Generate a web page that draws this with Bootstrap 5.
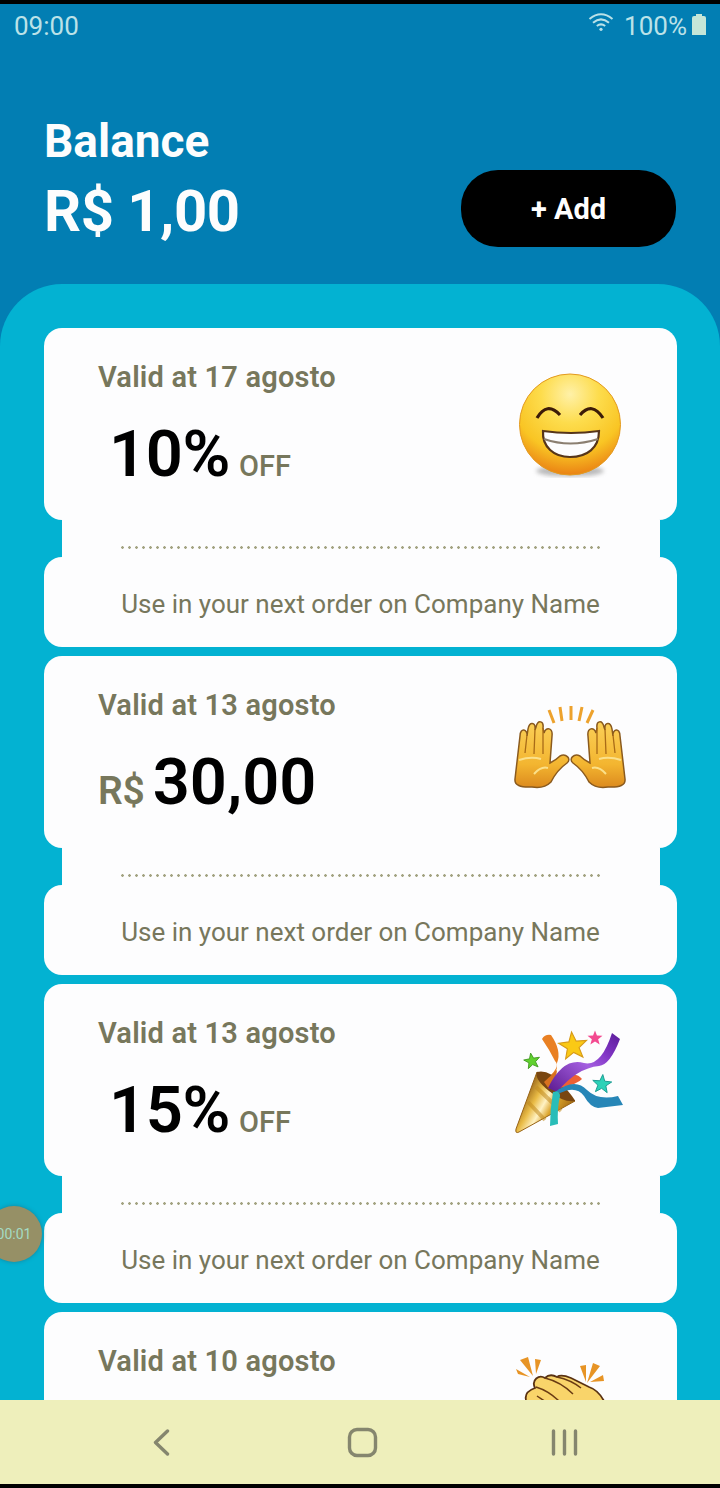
<!DOCTYPE html>
<html lang="en">
<head>
<meta charset="utf-8">
<meta name="viewport" content="width=device-width, initial-scale=1">
<title>Balance</title>
<link href="https://cdn.jsdelivr.net/npm/bootstrap@5.3.0/dist/css/bootstrap.min.css" rel="stylesheet">
<style>
  body { font-family: Roboto, sans-serif; background: #000; width: 720px; height: 1488px; color: #fdfdfd; }
  .phone { height: 1488px; border-top: 4px solid #000; border-bottom: 4px solid #000; background: #027eb3; }
  .statusbar { height: 44px; font-size: 26px; line-height: 44px; color: #bbe2e8; padding: 0 14px; flex: none; }
  .icon-wifi { margin: 9px 10px 0 0; }
  .icon-battery { margin: 10px 0 0 5px; }
  .hero { height: 236px; padding: 72px 44px 0; flex: none; }
  .hero-label { font-size: 46px; line-height: 54px; font-weight: 700; margin-top: -6px; }
  .hero-sum { font-size: 58px; line-height: 68px; font-weight: 700; margin-top: 9px; letter-spacing: -.5px; }
  .btn-add { width: 215px; height: 77px; border-radius: 37px; background: #000; color: #fff; font-size: 29px; font-weight: 700; margin-top: 50px; padding: 2px 0 0; }
  .btn-add:hover { background: #000; color: #fff; }
  .sheet { background: #03b2d2; border-radius: 62px 62px 0 0; padding: 44px 43px 0 44px; min-height: 0; }
  .ticket { height: 319px; margin-bottom: 9px; flex: none; }
  .t-top { height: 192px; background: #fdfdfe; border-radius: 18px; padding: 32px 45px 0 54px; color: #77775c; }
  .t-mid { height: 37px; background: #fdfdfe; margin: 0 17px 0 18px; padding: 26px 59px 0 57px; }
  .t-foot { height: 90px; background: #fdfdfe; border-radius: 18px; font-size: 26px; line-height: 94px; color: #77775c; white-space: nowrap; }
  .dots { height: 3px; background: radial-gradient(circle, #a3a382 1px, transparent 1.6px) 0 0 / 7px 3px repeat-x; }
  .valid { font-size: 29px; line-height: 34px; font-weight: 600; white-space: nowrap; letter-spacing: .19px; }
  .amount { margin-top: 20px; white-space: nowrap; line-height: 80px; }
  .amount b { font-size: 65px; color: #000; font-weight: 600; margin-left: 4px; }
  .amount .pct { margin: 0 5px 0 11px; letter-spacing: -.4px; }
  .off { font-size: 29px; font-weight: 500; }
  .cur { font-size: 39px; font-weight: 600; letter-spacing: -.2px; }
  .emoji { width: 140px; height: 130px; flex: none; margin-right: -8px; }
  .navkeys { height: 84px; background: #eeefbb; flex: none; }
  .rec { position: absolute; left: -14px; top: 1202px; width: 56px; height: 56px; border-radius: 50%; background: #969066; color: #a4dcc4; font-size: 14px; line-height: 57px; text-align: center; box-shadow: 0 0 4px #16839b; }
</style>
</head>
<body>
<svg width="0" height="0" class="position-absolute">
  <defs>
    <radialGradient id="face" cx=".5" cy=".2" r=".82"><stop offset="0" stop-color="#fff1a8"/><stop offset=".35" stop-color="#fddc4c"/><stop offset=".7" stop-color="#f9c524"/><stop offset="1" stop-color="#e97c12"/></radialGradient>
    <linearGradient id="skin" x1="0" y1="0" x2="0" y2="1"><stop offset="0" stop-color="#fbd058"/><stop offset=".65" stop-color="#f3b530"/><stop offset="1" stop-color="#dc8a1e"/></linearGradient>
    <linearGradient id="cone" x1="20" y1="80" x2="62" y2="104" gradientUnits="userSpaceOnUse"><stop offset="0" stop-color="#8d5a13"/><stop offset=".3" stop-color="#e9bb45"/><stop offset=".5" stop-color="#fff2c4"/><stop offset=".68" stop-color="#dca52d"/><stop offset="1" stop-color="#a86f14"/></linearGradient>
    <linearGradient id="violet" x1="0" y1="1" x2="1" y2="0"><stop offset="0" stop-color="#5b1a8f"/><stop offset=".5" stop-color="#a45fe0"/><stop offset=".72" stop-color="#8236c6"/><stop offset="1" stop-color="#5a1c98"/></linearGradient>
    <filter id="soft"><feGaussianBlur stdDeviation="2"/></filter>
    <path id="star" d="M0-10 2.6-3.2 10-3 4.2 1.6 6.2 8.6 0 4.6-6.2 8.6-4.2 1.6-10-3-2.6-3.2z"/>
    <g id="hand">
      <path d="M15 89 20 46C20 37 28 39 27 46L28 39C29 31 36 32 35 40L36 37C38 29 44 31 43 38L44 43C46 36 53 38 52 46L50 73Q56 70 60 66C66 63 72 69 67 73Q57 80 51 92Q44 99 32 97Q14 98 15 89z" fill="url(#skin)" stroke="#8a5a1e" stroke-width="1.500"/>
      <path d="M27 45 25 63M35 39 34 64M43 38 43 64" fill="none" stroke="#a96b17" stroke-width="1.300"/>
      <path d="M34 84Q41 76 48 78M19 70Q31 66 41 69" fill="none" stroke="#fbe08a" stroke-width="2"/>
    </g>
  </defs>
</svg>

<div class="phone d-flex flex-column position-relative overflow-hidden">
  <div class="statusbar d-flex justify-content-between">
    <span>09:00</span>
    <span class="d-flex">
      <svg class="icon-wifi" width="26" height="20" viewBox="0 0 26 20" fill="none" stroke="#bbe2e8" stroke-width="2"><path d="M1.500 6Q13-3.500 24.500 6M5 9.700Q13 3 21 9.700M8.800 13Q13 9.800 17.200 13"/><circle cx="13" cy="16.300" r="1.600" fill="#bbe2e8" stroke="none"/></svg>
      <span>100%</span>
      <svg class="icon-battery" width="14" height="22" viewBox="0 0 14 22" fill="#c5e6d8"><path d="M4 0H10V2H12Q14 2 14 4V21H0V4Q0 2 2 2H4z"/></svg>
    </span>
  </div>

  <header class="hero d-flex justify-content-between">
    <div>
      <div class="hero-label">Balance</div>
      <div class="hero-sum">R$ 1,00</div>
    </div>
    <button class="btn btn-add border-0">+ Add</button>
  </header>

  <main class="sheet flex-grow-1 overflow-hidden d-flex flex-column">
    <section class="ticket">
      <div class="t-top d-flex justify-content-between">
        <div><div class="valid">Valid at 17 agosto</div><div class="amount"><b class="pct">10%</b> <span class="off">OFF</span></div></div>
        <svg class="emoji" viewBox="0 0 140 130">
          <ellipse cx="70" cy="111" rx="34" ry="5.500" fill="#777" opacity=".5" filter="url(#soft)"/>
          <circle cx="70" cy="64.500" r="50.500" fill="url(#face)" stroke="#e39a20"/>
          <path d="M37 58Q47 41 60 55M80 55Q92 41 103 58" fill="none" stroke="#3c1b08" stroke-width="3.200"/>
          <path d="M43 71Q71 75 99 71C99 88 87 97 70 97C54 97 42 87 43 71z" fill="#fdfdfd" stroke="#563519" stroke-width="2.200"/>
          <path d="M44 79Q70 88 98 79" fill="none" stroke="#8b7f70" stroke-width="2.200"/>
        </svg>
      </div>
      <div class="t-mid"><div class="dots"></div></div>
      <div class="t-foot text-center">Use in your next order on Company Name</div>
    </section>

    <section class="ticket">
      <div class="t-top d-flex justify-content-between">
        <div><div class="valid">Valid at 13 agosto</div><div class="amount"><span class="cur">R$</span> <b>30,00</b></div></div>
        <svg class="emoji" viewBox="0 -2 140 130">
          <use href="#hand"/><use href="#hand" transform="translate(140)scale(-1 1)"/>
          <path d="M49 20 54 33M60 17 62 31M71 16V30M82 17 79 31M93 20 87 33" stroke="#eda22d" stroke-width="3"/>
        </svg>
      </div>
      <div class="t-mid"><div class="dots"></div></div>
      <div class="t-foot text-center">Use in your next order on Company Name</div>
    </section>

    <section class="ticket">
      <div class="t-top d-flex justify-content-between">
        <div><div class="valid">Valid at 13 agosto</div><div class="amount"><b class="pct">15%</b> <span class="off">OFF</span></div></div>
        <svg class="emoji" viewBox="0 -1 140 130">
          <path d="M42 22Q45 17 51 18Q62 34 57 46Q58 56 49 67L43 65Q62 50 55 44Q49 32 42 22z" fill="#e98023"/>
          <path d="M37 55 75 84 19 115Q15 117 16 112z" fill="url(#cone)" stroke="#986315" stroke-width="1"/>
          <path d="M36 70 61 94M28 85 45 103" stroke="#c18b20" stroke-width="4" opacity=".55"/>
          <path d="M37 55Q49 52 62 67T75 84Q64 86 49 74T37 55z" fill="#794610"/>
          <path d="M44 65 57 53 56 61 49 72z" fill="#d8711f"/>
          <path d="M63 61Q76 54 82 62Q78 67 60 71z" fill="#ee6134"/>
          <path d="M48 71Q63 40 84 46Q101 50 112 16L120 22Q110 48 99 49Q77 51 57 75z" fill="url(#violet)"/>
          <path d="M55 75Q75 60 87 73Q98 84 118 79L123 88 98 91Q90 90 84 79Q76 68 60 76z" fill="#2786b7"/>
          <path d="M53 75Q60 73 60 79Q57 92 58 107L50 109Q50 92 53 75z" fill="#29bdb8"/>
          <use href="#star" transform="translate(73 29)rotate(-6)scale(1.400)" fill="#fac915" stroke="#d79a18" stroke-width=".8"/>
          <use href="#star" transform="translate(95 21)scale(.75)" fill="#f34a90"/>
          <use href="#star" transform="translate(32 44)rotate(-10)scale(.8)" fill="#61d12f" stroke="#3c951c"/>
          <use href="#star" transform="translate(102 67)rotate(5)scale(.95)" fill="#2dd2b8" stroke="#1b9c92"/>
        </svg>
      </div>
      <div class="t-mid"><div class="dots"></div></div>
      <div class="t-foot text-center">Use in your next order on Company Name</div>
    </section>

    <section class="ticket">
      <div class="t-top d-flex justify-content-between">
        <div><div class="valid">Valid at 10 agosto</div></div>
        <svg class="emoji" viewBox="1 4 140 130">
          <path d="M27 60Q25 52 36 48C32 40 40 34 46 38Q51 33 58 37Q62 34 72 38L90 47Q102 51 108 68V100H45z" fill="#f9d46a" stroke="#5a3212" stroke-width="1.800"/>
          <path d="M37 47Q50 51 61 62M46 38Q62 42 74 54M58 37Q72 40 82 48M38 56 50 64" fill="none" stroke="#6a3b13" stroke-width="1.500"/>
          <path d="M21 20 29 17 34 36zM36 19 42 20 37 34zM17 29 19 34 31 37zM81 26 87 25 87 42zM94 23 101 26 88 43zM104 35 105 41 91 42z" fill="#e79425"/>
        </svg>
      </div>
    </section>
  </main>

  <nav class="navkeys d-flex">
    <svg width="720" height="84" viewBox="0 0 720 84" fill="none" stroke="#85866e" stroke-width="3.400" stroke-linecap="round" stroke-linejoin="round"><path d="M167.500 31 155.500 42.500 167.500 54M553.500 31V54M564.500 31V54M575.500 31V54"/><rect x="349.500" y="29.500" width="26" height="26" rx="7.500"/></svg>
  </nav>
  <div class="rec">00:01</div>
</div>
<script src="https://cdn.jsdelivr.net/npm/bootstrap@5.3.0/dist/js/bootstrap.bundle.min.js"></script>
</body>
</html>
